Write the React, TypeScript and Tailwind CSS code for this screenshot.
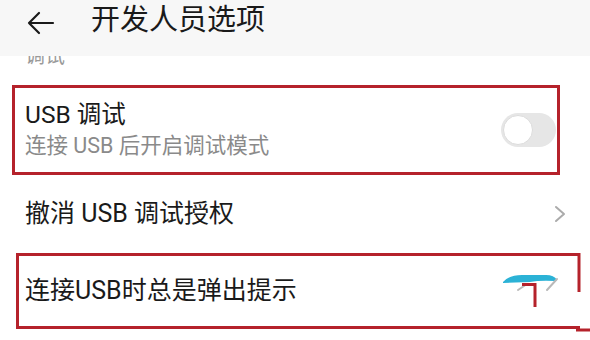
import React from 'react';

const font = { fontFamily: 'Roboto, "Noto Sans CJK SC", sans-serif' };

const BackArrow = () => (
    <svg width="28" height="24" viewBox="0 0 28 24" fill="none" stroke="#1a1a1a" strokeWidth="2.2" strokeLinecap="round" strokeLinejoin="round">
        <path d="M26 12H2M12 2L2 12l10 10" />
    </svg>
);

const Chevron = () => (
    <svg width="14" height="18" viewBox="0 0 14 18" fill="none" stroke="#ababab" strokeWidth="2" strokeLinecap="round" strokeLinejoin="round">
        <path d="M3 2l8 7-8 7" />
    </svg>
);

const Toggle = () => (
    <div className="relative w-[55px] h-[34px] rounded-full bg-[#e6e6e6]">
        <div className="absolute left-[2px] top-[2px] w-[30px] h-[30px] rounded-full bg-white border border-[#dcdcdc]" />
    </div>
);

// annotation marks over the last row (partially hidden switch + red pen strokes)
const Marks = () => (
    <svg className="absolute left-[490px] top-[250px]" width="100" height="90" viewBox="0 0 100 90" fill="none">
        <path d="M13 32 Q19 25 32 25 L56 25 Q64 25 67 30 L66 31 Q50 30 40 32 L13 33 Z" fill="#2bb2d6" />
        <path d="M28 40 L37 34" stroke="#b9b9b9" strokeWidth="2" strokeLinecap="round" />
        <path d="M67 29 L57 40" stroke="#b9b9b9" strokeWidth="2" strokeLinecap="round" />
        <path d="M32 34.5 H45 V57" stroke="#b5222b" strokeWidth="3" />
        <path d="M89 3 V42" stroke="#b5222b" strokeWidth="3" />
        <path d="M86 80 H100" stroke="#b5222b" strokeWidth="3" />
    </svg>
);

export default function App() {
    return (
        <div className="relative w-[590px] h-[340px] bg-white overflow-hidden" style={font}>
            {/* Header */}
            <div className="h-[56px] bg-[#f7f7f7] flex items-start pt-[3px]">
                <div className="ml-[27px] mt-[8px]">
                    <BackArrow />
                </div>
                <div className="ml-[36px] text-[29px] leading-[35px] text-[#1a1a1a]">开发人员选项</div>
            </div>

            {/* Section label, clipped by header */}
            <div className="h-[29px] overflow-hidden">
                <div className="pl-[25px] -mt-[12px] text-[20px] leading-[24px] text-[#9a9a9a]">调试</div>
            </div>

            {/* USB debugging */}
            <div className="ml-[12px] w-[548px] h-[90px] border-[3px] border-[#b5222b] flex items-center justify-between pl-[10px] pr-[1px]">
                <div className="flex flex-col">
                    <span className="text-[24.5px] leading-[30px] text-[#1a1a1a]">USB 调试</span>
                    <span className="text-[21.5px] leading-[28px] text-[#8a8a8a] mt-[2px]">连接 USB 后开启调试模式</span>
                </div>
                <Toggle />
            </div>

            {/* Revoke */}
            <div className="h-[78px] flex items-center justify-between pl-[25px] pr-[23px]">
                <span className="text-[25px] leading-[30px] text-[#1a1a1a]">撤消 USB 调试授权</span>
                <Chevron />
            </div>

            {/* Always prompt */}
            <div className="ml-[16px] w-[564px] h-[76px] border-[3px] border-r-0 border-[#b5222b] flex items-center pl-[6px]">
                <span className="text-[25px] leading-[30px] text-[#1a1a1a]">连接USB时总是弹出提示</span>
            </div>

            <Marks />
        </div>
    );
}
